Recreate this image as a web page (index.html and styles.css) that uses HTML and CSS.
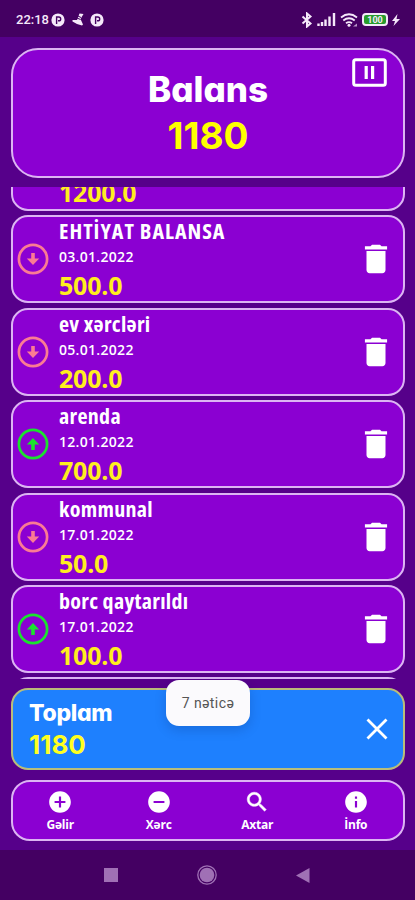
FILE: index.html
```html
<!DOCTYPE html>
<html lang="az">
<head>
    <meta charset="UTF-8">
    <meta name="viewport" content="width=device-width, initial-scale=1.0">
    <title>Balans</title>
    <link rel="stylesheet" href="styles.css">
</head>
<body>
    <!-- shared icons -->
    <svg class="sprite">
        <symbol id="down" viewBox="0 0 32 32">
            <circle cx="16" cy="16" r="14.1" fill="none" stroke="currentColor" stroke-width="2.7"/>
            <path d="M14.2 10h3.6v5.5h4.4L16 22l-6.2-6.5h4.4z" fill="currentColor"/>
        </symbol>
        <symbol id="up" viewBox="0 0 32 32">
            <circle cx="16" cy="16" r="14.1" fill="none" stroke="currentColor" stroke-width="2.7"/>
            <path d="M14.2 22h3.6v-5.5h4.4L16 10l-6.2 6.5h4.4z" fill="currentColor"/>
        </symbol>
        <symbol id="trash" viewBox="0 0 24 24">
            <path d="M6 19c0 1.1.9 2 2 2h8c1.1 0 2-.9 2-2V7H6v12zM19 4h-3.5l-1-1h-5l-1 1H5v2h14V4z" fill="currentColor"/>
        </symbol>
        <symbol id="badge" viewBox="0 0 14 14">
            <circle cx="7" cy="7" r="6.6" fill="currentColor"/>
            <path d="M5.6 11V4h2.200a1.900 1.900 0 0 1 0 3.800H7" fill="none" stroke="#440062" stroke-width="1.400"/>
        </symbol>
    </svg>

    <div class="statusbar">
        <div class="status-left">
            <span class="clock">22:18</span>
            <svg class="badge"><use href="#badge"/></svg>
            <svg class="shoe" viewBox="0 0 12 13"><path d="M7.5.5L11.500 1 8.500 6l2.500 5.500-1 1L5 11 .5 8.500V7L5 7z" fill="currentColor"/><path d="M6 3l3 1.500M5 5l3.500 1.500" stroke="#440062"/></svg>
            <svg class="badge"><use href="#badge"/></svg>
        </div>
        <div class="status-right">
            <svg width="12" height="16" viewBox="0 0 12 16"><path d="M1.500 4.500l8 7L6 14.500V1.500l3.500 3-8 7" fill="none" stroke="currentColor" stroke-width="2"/></svg>
            <svg width="19" height="13" viewBox="0 0 19 13"><path d="M1.500 13v-2.500M5 13V9M8.500 13V6.500M12.500 13V3.500M17 13V0" stroke="currentColor" stroke-width="2.400"/></svg>
            <svg width="18" height="14" viewBox="0 0 18 14"><path d="M1 4.500q8-6.500 16 0M3.300 7.500q5.700-4.500 11.400 0M6 10.300q3-2.300 6 0" fill="none" stroke="currentColor" stroke-width="1.800"/><circle cx="9" cy="12.300" r="1.500" fill="currentColor"/><path d="M13 13.500h4v-3z" fill="#b996c8"/></svg>
            <div class="battery">100</div>
            <svg class="bolt" width="8" height="12" viewBox="0 0 8 12"><path d="M5.500 0L0 7h3L1.500 12 8 5H4.500z" fill="currentColor"/></svg>
        </div>
    </div>

    <div class="app">
        <div class="card header">
            <div class="title">Balans</div>
            <div class="total">1180</div>
            <svg class="pause" viewBox="0 0 35 29"><rect x="1.700" y="1.700" width="31.600" height="25.600" rx="2" fill="none" stroke="currentColor" stroke-width="3"/><path d="M14.200 8v13M20.600 8v13" stroke="currentColor" stroke-width="3.200"/></svg>
        </div>

        <div class="list">
            <div class="card item first">
                <div class="amount">1200.0</div>
            </div>
            <div class="card item">
                <svg class="arrow red"><use href="#down"/></svg>
                <div class="info">
                    <div class="name caps">EHTİYAT BALANSA</div>
                    <div class="date">03.01.2022</div>
                    <div class="amount">500.0</div>
                </div>
                <svg class="trash"><use href="#trash"/></svg>
            </div>
            <div class="card item">
                <svg class="arrow red"><use href="#down"/></svg>
                <div class="info">
                    <div class="name">ev xərcləri</div>
                    <div class="date">05.01.2022</div>
                    <div class="amount">200.0</div>
                </div>
                <svg class="trash"><use href="#trash"/></svg>
            </div>
            <div class="card item">
                <svg class="arrow green"><use href="#up"/></svg>
                <div class="info">
                    <div class="name">arenda</div>
                    <div class="date">12.01.2022</div>
                    <div class="amount">700.0</div>
                </div>
                <svg class="trash"><use href="#trash"/></svg>
            </div>
            <div class="card item">
                <svg class="arrow red"><use href="#down"/></svg>
                <div class="info">
                    <div class="name">kommunal</div>
                    <div class="date">17.01.2022</div>
                    <div class="amount">50.0</div>
                </div>
                <svg class="trash"><use href="#trash"/></svg>
            </div>
            <div class="card item">
                <svg class="arrow green"><use href="#up"/></svg>
                <div class="info">
                    <div class="name">borc qaytarıldı</div>
                    <div class="date">17.01.2022</div>
                    <div class="amount">100.0</div>
                </div>
                <svg class="trash"><use href="#trash"/></svg>
            </div>
            <div class="card item"></div>
        </div>

        <div class="card summary">
            <div>
                <div class="summary-title">Toplam</div>
                <div class="summary-total">1180</div>
            </div>
            <svg class="close" viewBox="0 0 22 22"><path d="M1.500 1.500l19 19M20.500 1.500l-19 19" stroke="currentColor" stroke-width="2.800"/></svg>
            <div class="toast">7 nəticə</div>
        </div>

        <div class="card menu">
            <div class="menu-item">
                <svg viewBox="0 0 24 24"><path d="M12 2C6.480 2 2 6.480 2 12s4.480 10 10 10 10-4.480 10-10S17.520 2 12 2zm5 11h-4v4h-2v-4H7v-2h4V7h2v4h4v2z" fill="currentColor"/></svg>
                <span>Gəlir</span>
            </div>
            <div class="menu-item">
                <svg viewBox="0 0 24 24"><path d="M12 2C6.480 2 2 6.480 2 12s4.480 10 10 10 10-4.480 10-10S17.520 2 12 2zm5 11H7v-2h10v2z" fill="currentColor"/></svg>
                <span>Xərc</span>
            </div>
            <div class="menu-item">
                <svg viewBox="0 0 24 24"><path d="M15.500 14h-.790l-.280-.270C15.410 12.590 16 11.110 16 9.500 16 5.910 13.090 3 9.500 3S3 5.910 3 9.500 5.910 16 9.500 16c1.610 0 3.090-.590 4.230-1.570l.270.280v.790l5 4.990L20.490 19l-4.990-5zm-6 0C7.010 14 5 11.990 5 9.500S7.010 5 9.500 5 14 7.010 14 9.500 11.990 14 9.500 14z" fill="currentColor" stroke="currentColor" stroke-width=".5"/></svg>
                <span>Axtar</span>
            </div>
            <div class="menu-item">
                <svg viewBox="0 0 24 24"><path d="M12 2C6.480 2 2 6.480 2 12s4.480 10 10 10 10-4.480 10-10S17.520 2 12 2zm1 15h-2v-6h2v6zm0-8h-2V7h2v2z" fill="currentColor"/></svg>
                <span>İnfo</span>
            </div>
        </div>
    </div>

    <div class="navbar">
        <svg width="14" height="14"><rect width="14" height="14" fill="currentColor"/></svg>
        <svg width="20" height="20"><circle cx="10" cy="10" r="9.200" fill="none" stroke="currentColor" stroke-width="1.300"/><circle cx="10" cy="10" r="7.300" fill="currentColor"/></svg>
        <svg width="14" height="15"><path d="M13.500 0v15L0 7.500z" fill="currentColor"/></svg>
    </div>
</body>
</html>
```
FILE: styles.css
```css
* {
    box-sizing: border-box;
}
body {
    margin: 0;
    width: 415px;
    height: 900px;
    display: flex;
    flex-direction: column;
    background-color: #56008a;
    color: #fff;
    overflow: hidden;
    font-family: "Open Sans", "Noto Sans", sans-serif;
    font-weight: 700;
}
svg {
    display: block;
    flex: none;
}
.sprite {
    position: absolute;
    width: 0;
    height: 0;
}
.statusbar {
    height: 37px;
    flex: none;
    display: flex;
    justify-content: space-between;
    align-items: center;
    padding: 2px 15px 0 16px;
    background-color: #440062;
    color: #f5e8fa;
}
.status-left, .status-right {
    display: flex;
    align-items: center;
}
.clock {
    font: 500 13px/16px Roboto, sans-serif;
    width: 35px;
}
.badge {
    width: 14px;
    height: 14px;
}
.shoe {
    width: 12px;
    height: 13px;
    margin: 0 6px 0 7px;
}
.status-right svg {
    margin-right: 4px;
}
.battery {
    width: 26px;
    height: 13px;
    border: 2px solid #f5e8fa;
    border-radius: 4px;
    background-color: #279b2c;
    font: 700 9px/10px Roboto, sans-serif;
    text-align: center;
}
.status-right .bolt {
    margin: 0 0 0 4px;
}
.app {
    flex: 1;
    min-height: 0;
    display: flex;
    flex-direction: column;
    padding: 11px 10px 0 11px;
}
.card {
    flex: none;
    background-color: #8b00d2;
    border: 2px solid #dcb4f3;
    border-radius: 17px;
}
.header {
    position: relative;
    height: 130px;
    border-radius: 27px;
    text-align: center;
    padding-top: 16px;
}
.title {
    font: 800 35px/46px Inter, sans-serif;
    font-feature-settings: "cv11";
}
.total {
    font: 700 37px/48px Inter, sans-serif;
    color: #ffff00;
}
.pause {
    position: absolute;
    top: 8px;
    right: 16px;
    width: 35px;
    height: 29px;
}
.list {
    height: 492px;
    flex: none;
    margin-top: 9px;
    overflow: hidden;
    display: flex;
    flex-direction: column;
    gap: 4.4px;
}
.item {
    height: 88px;
    display: flex;
    align-items: center;
    padding: 0 8px 0 4px;
}
.item.first {
    margin-top: -64px;
    align-items: flex-end;
    padding-left: 46px;
}
.arrow {
    width: 32px;
    height: 32px;
}
.red {
    color: #fb7b93;
}
.green {
    color: #1be22e;
}
.info {
    flex: 1;
    margin-left: 10px;
    padding-top: 1px;
    white-space: nowrap;
}
.name {
    font-size: 22px;
    font-stretch: 75%;
    line-height: 27px;
    letter-spacing: 0.3px;
}
.caps {
    letter-spacing: 1px;
}
.date {
    font-size: 14px;
    font-weight: 600;
    line-height: 25px;
    letter-spacing: 0.3px;
}
.amount {
    color: #ffee20;
    font-size: 25px;
    line-height: 33px;
    letter-spacing: -0.2px;
}
.trash {
    width: 38px;
    height: 38px;
}
.summary {
    position: relative;
    height: 82px;
    margin-top: 9px;
    display: flex;
    justify-content: space-between;
    align-items: center;
    padding: 0 15px 0 16px;
    background-color: #1e80fe;
    border-color: #b9bd7a;
}
.summary-title {
    font: 800 23px/32px Inter, sans-serif;
    font-feature-settings: "cv11";
    letter-spacing: -0.3px;
}
.summary-total {
    color: #ffff20;
    font: 700 26px/32px Inter, sans-serif;
}
.close {
    width: 22px;
    height: 22px;
}
.toast {
    position: absolute;
    top: -10px;
    left: 153px;
    width: 84px;
    height: 46px;
    border-radius: 13px;
    background-color: #fbfafd;
    box-shadow: 0 4px 12px rgba(0, 30, 90, 0.2);
    color: #555;
    font: 400 14px/47px Roboto, "Noto Sans", sans-serif;
    letter-spacing: 0.4px;
    text-align: center;
}
.menu {
    height: 61px;
    margin-top: 10px;
    display: flex;
    border-radius: 19px;
}
.menu-item {
    flex: 1;
    display: flex;
    flex-direction: column;
    align-items: center;
    padding-top: 7px;
    font-size: 12px;
    line-height: 20px;
    letter-spacing: -0.2px;
}
.menu-item:first-child {
    margin-left: -2px;
}
.menu-item:last-child {
    margin-right: -2px;
}
.menu-item svg {
    width: 26px;
    height: 26px;
}
.navbar {
    height: 50px;
    flex: none;
    display: flex;
    justify-content: space-between;
    align-items: center;
    padding: 0 105px 0 104px;
    background-color: #440062;
    color: #a070b5;
}
```
